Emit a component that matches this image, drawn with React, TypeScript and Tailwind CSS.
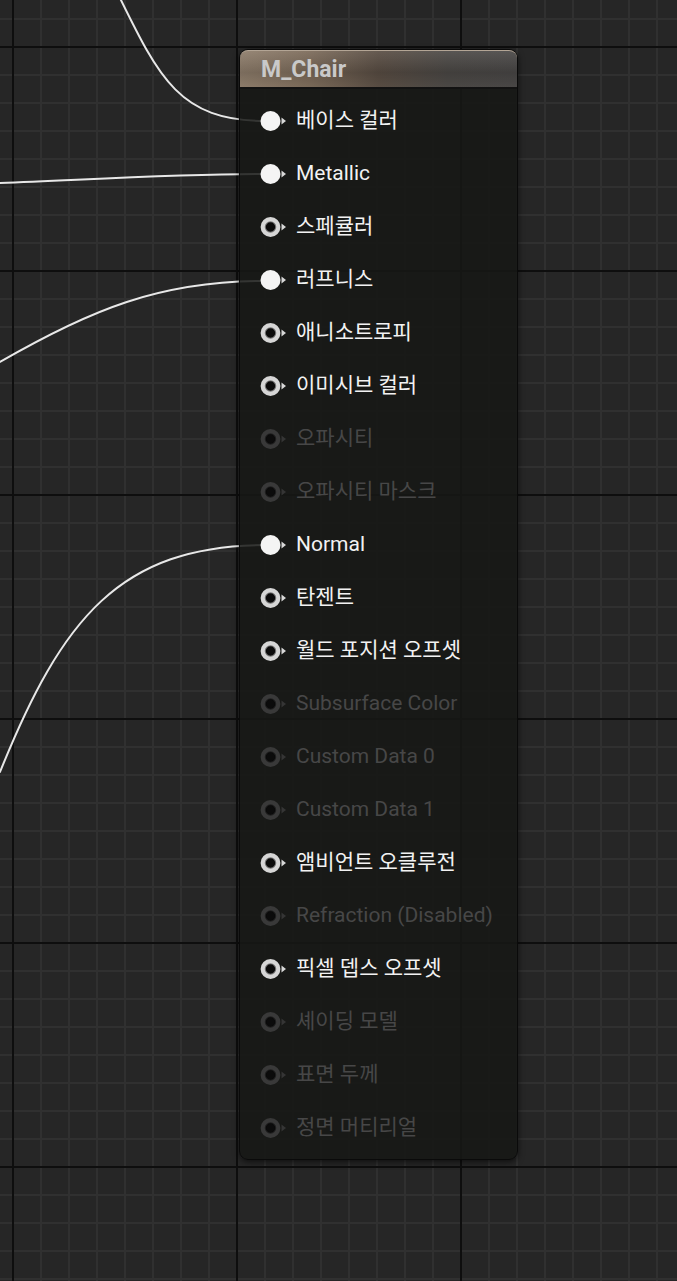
// Material result node on a dark graph canvas (UE-style material editor).

type PinState = 'connected' | 'enabled' | 'disabled'

type Input = {
  label: string
  state: PinState
}

const INPUTS: Input[] = [
  { label: '베이스 컬러', state: 'connected' },
  { label: 'Metallic', state: 'connected' },
  { label: '스페큘러', state: 'enabled' },
  { label: '러프니스', state: 'connected' },
  { label: '애니소트로피', state: 'enabled' },
  { label: '이미시브 컬러', state: 'enabled' },
  { label: '오파시티', state: 'disabled' },
  { label: '오파시티 마스크', state: 'disabled' },
  { label: 'Normal', state: 'connected' },
  { label: '탄젠트', state: 'enabled' },
  { label: '월드 포지션 오프셋', state: 'enabled' },
  { label: 'Subsurface Color', state: 'disabled' },
  { label: 'Custom Data 0', state: 'disabled' },
  { label: 'Custom Data 1', state: 'disabled' },
  { label: '앰비언트 오클루전', state: 'enabled' },
  { label: 'Refraction (Disabled)', state: 'disabled' },
  { label: '픽셀 뎁스 오프셋', state: 'enabled' },
  { label: '셰이딩 모델', state: 'disabled' },
  { label: '표면 두께', state: 'disabled' },
  { label: '정면 머티리얼', state: 'disabled' },
]

// wires coming in from the left, ending at the pin centers
const WIRES = [
  'M 118 -6 C 160 80, 180 120, 264 121',
  'M 0 183 C 100 179, 180 174, 264 174',
  'M 0 362 C 90 310, 160 281, 264 281',
  'M 0 772 C 62 618, 120 546, 264 545',
]

function Canvas() {
  return (
    <svg className="absolute inset-0" width={677} height={1281}>
      <defs>
        <pattern id="minor" x={12} y={18} width={28} height={28} patternUnits="userSpaceOnUse">
          <rect x={0} y={0} width={2} height={28} fill="#303030" />
          <rect x={0} y={0} width={28} height={2} fill="#303030" />
        </pattern>
        <pattern id="major" x={12} y={46} width={224} height={224} patternUnits="userSpaceOnUse">
          <rect x={0} y={0} width={2} height={224} fill="#0e0e0e" />
          <rect x={0} y={0} width={224} height={2} fill="#0e0e0e" />
        </pattern>
      </defs>
      <rect width={677} height={1281} fill="#262626" />
      <rect width={677} height={1281} fill="url(#minor)" />
      <rect width={677} height={1281} fill="url(#major)" />
      {WIRES.map((d) => (
        <path key={d} d={d} fill="none" stroke="#e8e8e8" strokeWidth={2} strokeLinecap="round" />
      ))}
    </svg>
  )
}

function Pin({ state }: { state: PinState }) {
  const ring = state === 'disabled' ? '#393939' : '#d6d6d6'
  const arrow = state === 'disabled' ? '#353535' : '#d8d8d8'
  return (
    <svg width={27} height={22} viewBox="0 0 27 22" className="shrink-0">
      {state === 'connected' ? (
        <circle cx={10.5} cy={11} r={10} fill="#f4f4f4" />
      ) : (
        <>
          <circle cx={10.5} cy={11} r={7.3} fill="#0b0b0b" stroke={ring} strokeWidth={5.2} />
          <circle cx={10.5} cy={11} r={5} fill="none" stroke="#000" strokeOpacity={0.45} strokeWidth={1.5} />
        </>
      )}
      <polygon points="21.5,7.5 26,11 21.5,14.5" fill={arrow} />
    </svg>
  )
}

function InputRow({ input }: { input: Input }) {
  const color = input.state === 'disabled' ? 'text-[#474747]' : 'text-[#f2f2f2]'
  return (
    <div className="flex h-[53px] items-center gap-[9px] pl-[20px]">
      <Pin state={input.state} />
      <span className={`whitespace-nowrap text-[21px] leading-none ${color}`}>{input.label}</span>
    </div>
  )
}

function MaterialNode() {
  return (
    <div className="absolute left-[239px] top-[49px] w-[279px] rounded-[9px] border border-[#0a0a0a] bg-[rgba(22,23,21,0.86)] shadow-[0_2px_6px_rgba(0,0,0,0.6)]">
      <div className="flex h-[39px] items-center rounded-t-[8px] border-t border-[#b3a595] border-b-2 border-b-[#121212] bg-[linear-gradient(180deg,rgba(255,255,255,0.07),rgba(0,0,0,0.14)_60%,rgba(0,0,0,0.02)),linear-gradient(90deg,#8f7e6c,#7c6b5a_25%,#5a4e44_50%,#4c4946_75%,#4a4847)] pl-[21px]">
        <span className="text-[23px] font-bold leading-none text-[#c9c9c9]">M_Chair</span>
      </div>
      <div className="pt-[5px] pb-[5px]">
        {INPUTS.map((input) => (
          <InputRow key={input.label} input={input} />
        ))}
      </div>
    </div>
  )
}

export default function App() {
  return (
    <div
      className="relative h-[1281px] w-[677px] overflow-hidden bg-[#262626]"
      style={{ fontFamily: 'Roboto, "Noto Sans CJK KR", sans-serif' }}
    >
      <Canvas />
      <MaterialNode />
    </div>
  )
}
